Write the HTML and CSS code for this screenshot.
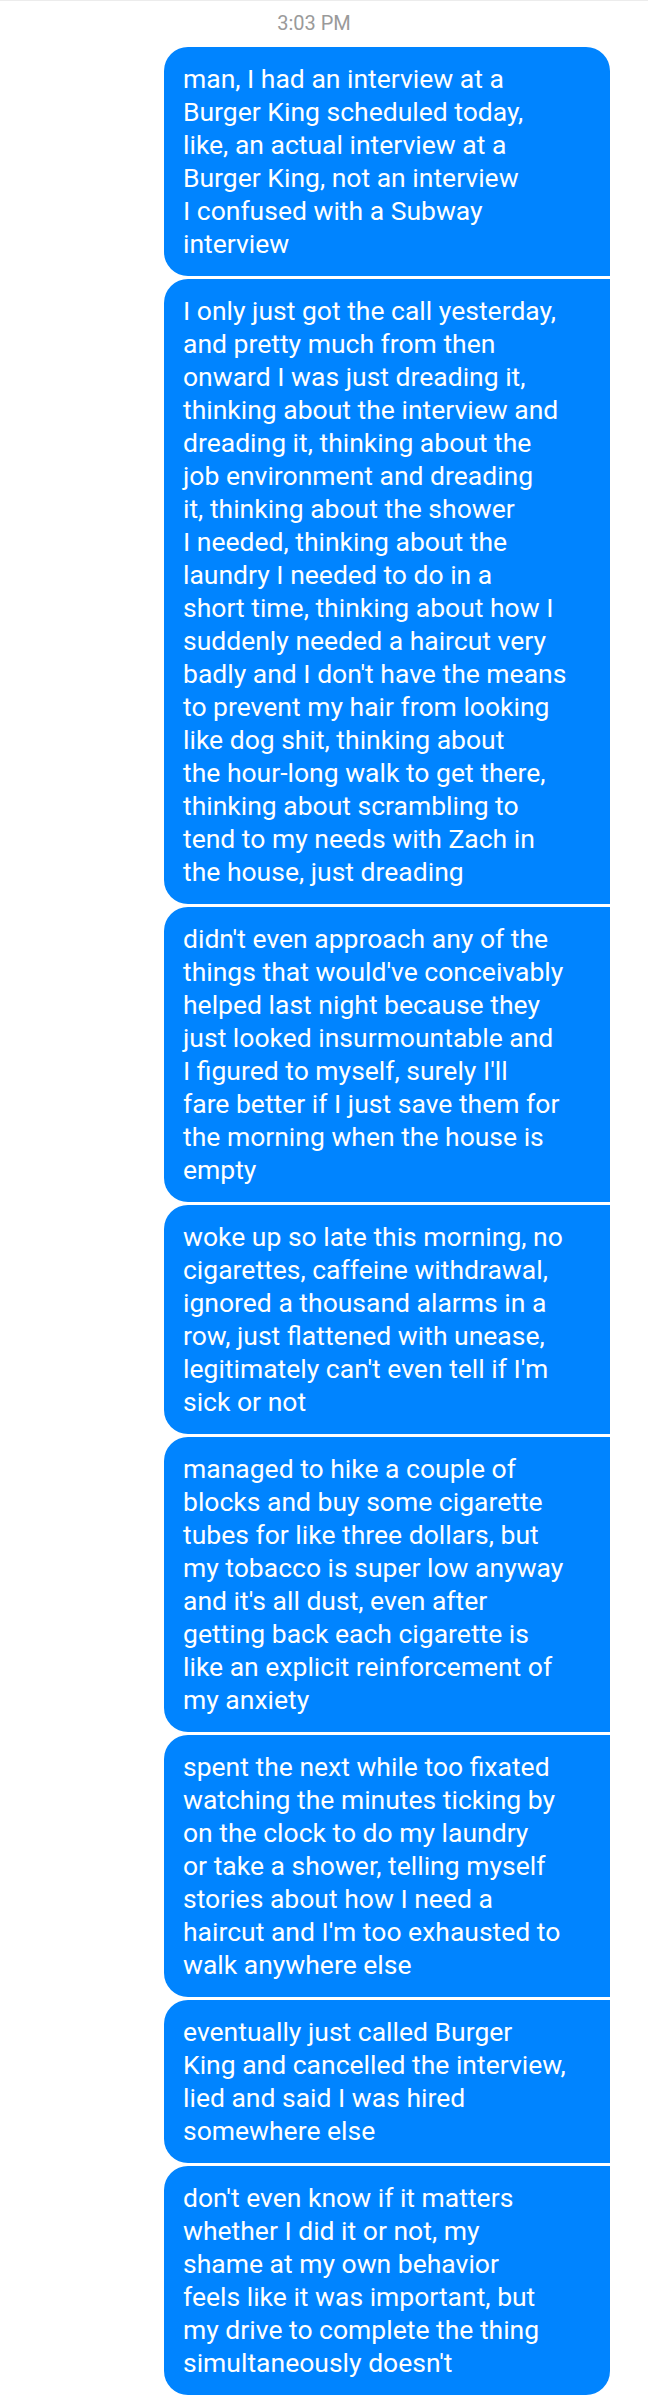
FILE: index.html
```html
<!DOCTYPE html>
<html>
<head>
<meta charset="utf-8">
<link rel="stylesheet" href="styles.css">
</head>
<body>
<div class="screen">
  <div class="time">3:03 PM</div>
  <div class="thread">
    <div class="bubble first">man, I had an interview at a<br>Burger King scheduled today,<br>like, an actual interview at a<br>Burger King, not an interview<br>I confused with a Subway<br>interview</div>
    <div class="bubble">I only just got the call yesterday,<br>and pretty much from then<br>onward I was just dreading it,<br>thinking about the interview and<br>dreading it, thinking about the<br>job environment and dreading<br>it, thinking about the shower<br>I needed, thinking about the<br>laundry I needed to do in a<br>short time, thinking about how I<br>suddenly needed a haircut very<br>badly and I don't have the means<br>to prevent my hair from looking<br>like dog shit, thinking about<br>the hour-long walk to get there,<br>thinking about scrambling to<br>tend to my needs with Zach in<br>the house, just dreading</div>
    <div class="bubble">didn't even approach any of the<br>things that would've conceivably<br>helped last night because they<br>just looked insurmountable and<br>I figured to myself, surely I'll<br>fare better if I just save them for<br>the morning when the house is<br>empty</div>
    <div class="bubble">woke up so late this morning, no<br>cigarettes, caffeine withdrawal,<br>ignored a thousand alarms in a<br>row, just flattened with unease,<br>legitimately can't even tell if I'm<br>sick or not</div>
    <div class="bubble">managed to hike a couple of<br>blocks and buy some cigarette<br>tubes for like three dollars, but<br>my tobacco is super low anyway<br>and it's all dust, even after<br>getting back each cigarette is<br>like an explicit reinforcement of<br>my anxiety</div>
    <div class="bubble">spent the next while too fixated<br>watching the minutes ticking by<br>on the clock to do my laundry<br>or take a shower, telling myself<br>stories about how I need a<br>haircut and I'm too exhausted to<br>walk anywhere else</div>
    <div class="bubble">eventually just called Burger<br>King and cancelled the interview,<br>lied and said I was hired<br>somewhere else</div>
    <div class="bubble last">don't even know if it matters<br>whether I did it or not, my<br>shame at my own behavior<br>feels like it was important, but<br>my drive to complete the thing<br>simultaneously doesn't</div>
  </div>
</div>
</body>
</html>
```

FILE: styles.css
```css
html, body {
  margin: 0;
  padding: 0;
  background: #ffffff;
}

.screen {
  width: 648px;
  min-height: 2402px;
  border-top: 1px solid #ececec;
  box-sizing: border-box;
  font-family: Roboto, "Noto Sans", sans-serif;
}

.time {
  padding: 10px 20px 0 0;
  height: 24px;
  line-height: 24px;
  margin-bottom: 12px;
  text-align: center;
  font-size: 20px;
  color: #9a9a9a;
}

.thread {
  display: flex;
  flex-direction: column;
  align-items: flex-end;
  gap: 3px;
  padding-right: 38px;
}

.bubble {
  width: 446px;
  box-sizing: border-box;
  padding: 15px 10px 16px 19px;
  background: #0084ff;
  color: #ffffff;
  font-size: 26.5px;
  line-height: 33px;
  white-space: nowrap;
  border-radius: 24px 0 0 24px;
}

.bubble.first {
  border-radius: 24px 24px 0 24px;
}

.bubble.last {
  border-radius: 24px 0 24px 24px;
}
```
